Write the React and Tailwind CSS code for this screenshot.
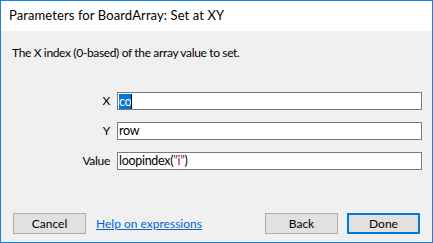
import React from 'react'

const Field = ({ label, children, selected }) => {
  return (
    <div className="flex items-center h-[18px]">
      <label className="w-[110px] pr-[1px] text-right text-[12px] tracking-[-0.3px] text-black">{label}</label>
      <div className="ml-[6px] flex h-[18px] w-[305px] items-center border border-[#7a7a7a] bg-white px-[1px] text-[12.5px] tracking-[-0.3px] text-black">
        {selected ? (
          <>
            <span className="bg-[#0078d7] text-white leading-[15px]">{children}</span>
            <span className="h-[15px] w-[1px] bg-black" />
          </>
        ) : (
          <span>{children}</span>
        )}
      </div>
    </div>
  )
}

const Button = ({ children, primary }) => {
  return (
    <button
      type="button"
      className={
        primary
          ? 'h-[21px] w-[73px] border-2 border-[#0078d7] bg-[#e1e1e1] text-[12px] text-black'
          : 'h-[21px] w-[73px] border border-[#adadad] bg-[#e1e1e1] text-[12px] text-black'
      }
    >
      {children}
    </button>
  )
}

export default function App() {
  return (
    <main
      className="flex h-[243px] w-[433px] flex-col border border-[#1883d7] bg-[#f0f0f0]"
      style={{ fontFamily: 'Lato, "Open Sans", sans-serif' }}
    >
      <header className="flex h-[30px] items-center bg-white pl-[8px] text-[13px] tracking-[0.1px] text-black">
        Parameters for BoardArray: Set at XY
      </header>

      <p className="mt-[13px] pl-[11px] text-[12px] tracking-[-0.35px] text-black">
        The X index (0-based) of the array value to set.
      </p>

      <form className="mt-[30px] flex flex-col gap-[12px]">
        <Field label="X" selected>co</Field>
        <Field label="Y">row</Field>
        <Field label="Value">
          loopindex(<span className="text-[#a31515]">"i"</span>)
        </Field>
      </form>

      <footer className="mt-auto mb-[8px] flex items-center pl-[12px] pr-[12px]">
        <Button>Cancel</Button>
        <a href="#" className="ml-[10px] text-[12px] text-[#0066cc] underline">
          Help on expressions
        </a>
        <div className="ml-auto flex gap-[9px]">
          <Button>Back</Button>
          <Button primary>Done</Button>
        </div>
      </footer>
    </main>
  )
}
